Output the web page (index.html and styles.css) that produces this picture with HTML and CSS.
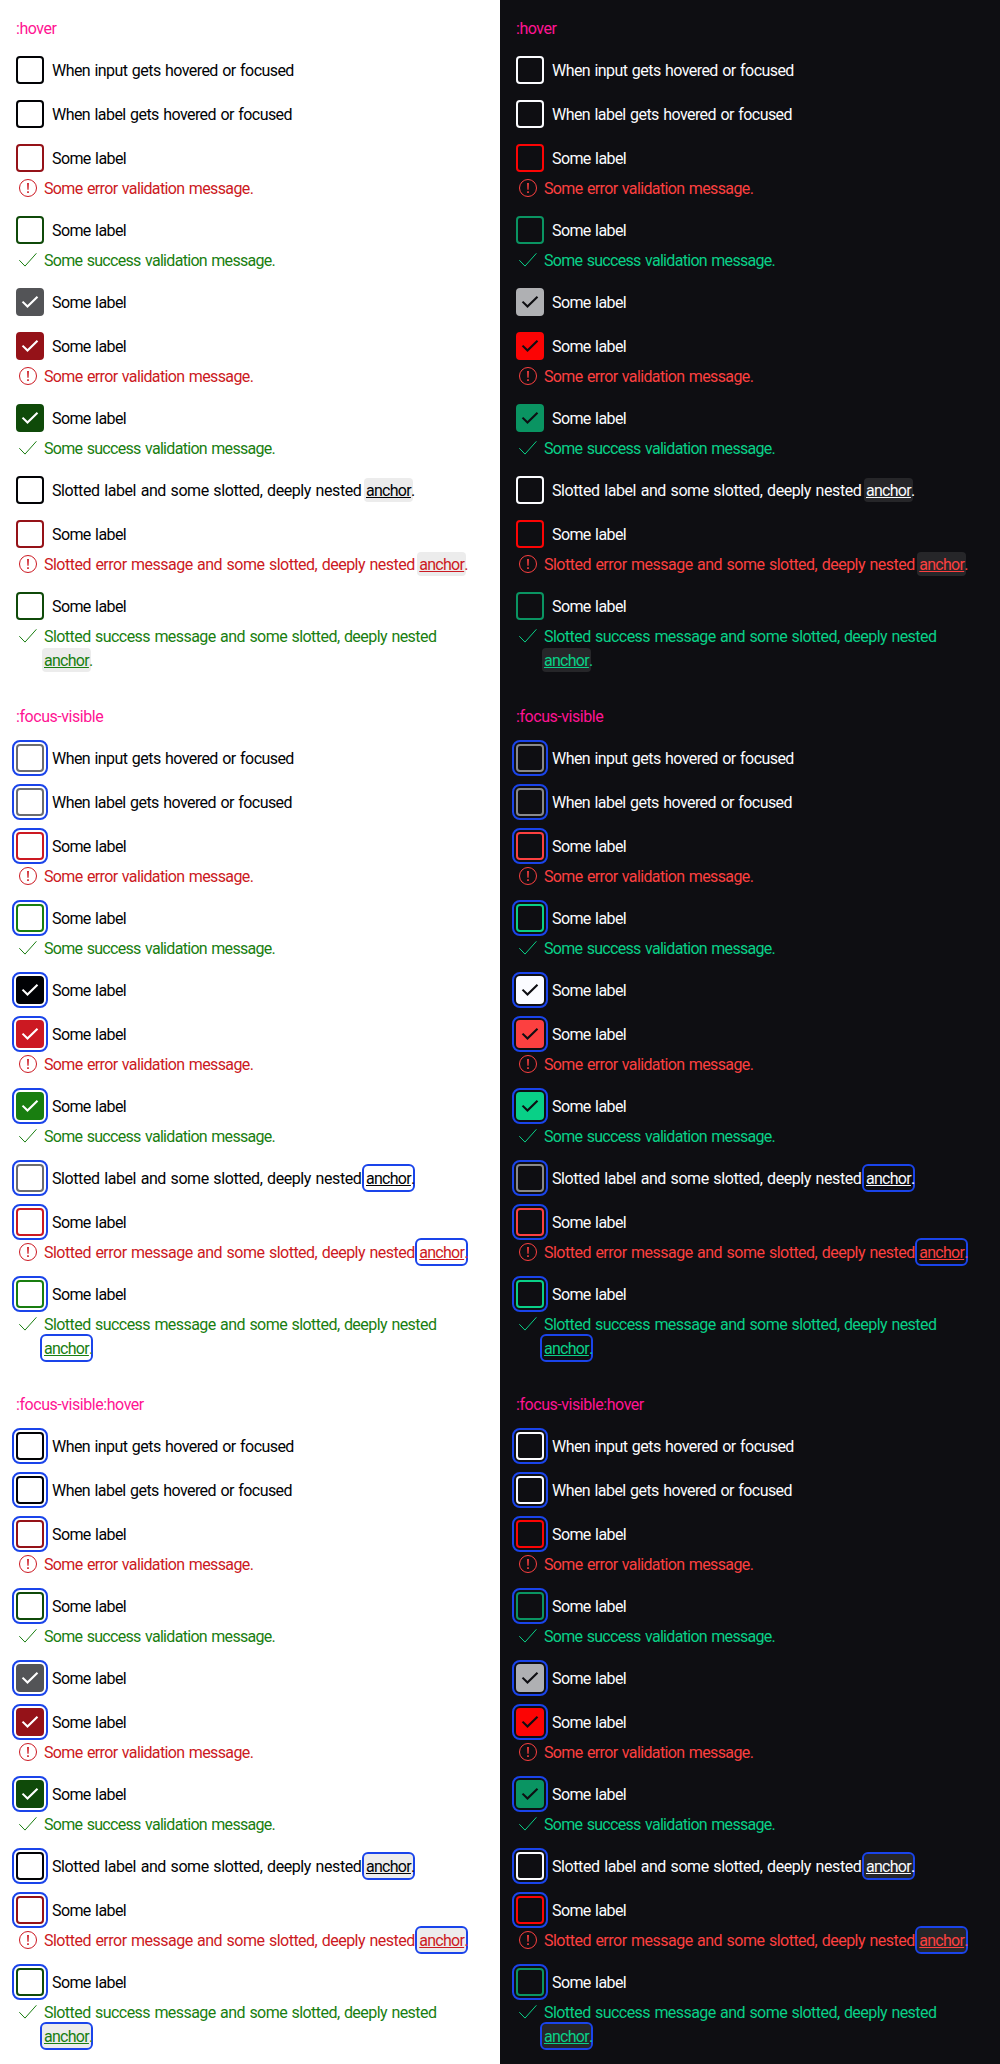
FILE: index.html
```html
<!DOCTYPE html>
<html lang="en">
<head>
<meta charset="utf-8">
<title>Checkbox states</title>
<link rel="stylesheet" href="styles.css">
</head>
<body>
<svg class="sprite" aria-hidden="true">
  <symbol id="tick" viewBox="0 0 24 24"><path d="m20.22 7.47-1.47-1.42-9.26 9.02-4.24-4.15-1.47 1.42 5.71 5.6z" fill="currentColor"/></symbol>
  <symbol id="success" viewBox="0 0 24 24"><path d="M3.3 12.2 9 18.1 20.4 5.3" fill="none" stroke="currentColor"/></symbol>
  <symbol id="error" viewBox="0 0 24 24"><circle cx="12" cy="12" r="8.5" fill="none" stroke="currentColor"/><path d="M11.1 7h1.8l-.3 6.8h-1.2zM11.2 15.2h1.6v1.7h-1.6z" fill="currentColor"/></symbol>
</svg>
<main class="themes">
  <div class="theme theme--light"></div>
  <div class="theme theme--dark"></div>
</main>
<script src="script.js"></script>
</body>
</html>
```
FILE: script.js
```js
const anchor = '<a class="anchor">anchor</a>.';
const messages = {
  error: '<span class="t-error">Some error validation message.</span>',
  success: '<span class="t-success">Some success validation message.</span>',
};
const label = '<span class="t-label">Some label</span>';
const fields = [
  { label: '<span class="t-input">When input gets hovered or focused</span>' },
  { label: '<span class="t-input">When label gets hovered or focused</span>' },
  { label, state: 'error', message: messages.error },
  { label, state: 'success', message: messages.success },
  { label, checked: true },
  { label, state: 'error', checked: true, message: messages.error },
  { label, state: 'success', checked: true, message: messages.success },
  { label: '<span class="t-slotted-label">Slotted label and some slotted, deeply nested </span>' + anchor },
  { label, state: 'error', message: '<span class="t-slotted-error">Slotted error message and some slotted, deeply nested </span>' + anchor },
  { label, state: 'success', message: '<span class="t-slotted-success">Slotted success message and some slotted, deeply nested </span>' + anchor },
];
const sections = [
  { title: ':hover', classes: 'is-hover' },
  { title: ':focus-visible', classes: 'is-focus' },
  { title: ':focus-visible:hover', classes: 'is-focus is-hover' },
];
const icon = (name) => `<svg class="icon"><use href="#${name}"/></svg>`;

const renderField = ({ label, state = 'none', checked, message }) => `
  <div class="field field--${state}">
    <label class="field__label">
      <span class="checkbox${checked ? ' checkbox--checked' : ''}">${checked ? icon('tick') : ''}</span>
      <span class="field__text">${label}</span>
    </label>
    ${message ? `<div class="message">${icon(state)}<p class="message__text">${message}</p></div>` : ''}
  </div>`;

const html = sections.map(({ title, classes }) => `
  <section class="section ${classes}">
    <h2 class="title">${title}</h2>
    ${fields.map(renderField).join('')}
  </section>`).join('');

document.querySelectorAll('.theme').forEach((el) => { el.innerHTML = html; });
```
FILE: styles.css
```css
* { box-sizing: border-box; }

body {
  margin: 0;
  font: 400 16px/24px Roboto, "Liberation Sans", sans-serif;
  word-spacing: 1px;
}

.sprite { display: none; }

.themes {
  display: grid;
  grid-template-columns: 1fr 1fr;
}

.theme {
  background: var(--background);
  color: var(--primary);
}

.theme--light {
  --background: #fff;
  --primary: #010205;
  --medium: #6b6d70;
  --high: #535457;
  --error: #cc1922;
  --error-hover: #951218;
  --success: #197e10;
  --success-hover: #0f4a09;
}

.theme--dark {
  --background: #0e0e12;
  --primary: #fbfcff;
  --medium: #88898c;
  --high: #afb0b3;
  --error: #fc4040;
  --error-hover: #fc0404;
  --success: #09d087;
  --success-hover: #0a9462;
}

.section {
  display: flex;
  flex-direction: column;
  gap: 16px;
  padding: 16px;
  height: 688px;
}

.title {
  margin: 0;
  padding-top: 1px;
  height: 24px;
  font: inherit;
  letter-spacing: -.45px;
  color: #ff1493;
}

.field {
  display: flex;
  flex-direction: column;
  gap: 4px;
}

.field__label {
  display: flex;
  gap: 8px;
  height: 28px;
}

.field__text { padding-top: 3px; }

/* Tracking per copy block */
.t-input { letter-spacing: -.56px; }
.t-label { letter-spacing: -.6px; }
.t-error { letter-spacing: -.63px; }
.t-success { letter-spacing: -.69px; }
.t-slotted-label { letter-spacing: -.41px; }
.t-slotted-error { letter-spacing: -.51px; }
.t-slotted-success { letter-spacing: -.555px; }

.checkbox {
  display: grid;
  place-items: center;
  flex: none;
  width: 28px;
  height: 28px;
  border: 2px solid var(--frame);
  border-radius: 4px;
}

.checkbox--checked {
  border-color: var(--fill);
  background: var(--fill);
  color: var(--background);
}

.field--none { --frame: var(--medium); --fill: var(--primary); }
.field--error { --frame: var(--error); --fill: var(--error); }
.field--success { --frame: var(--success); --fill: var(--success); }
.is-hover .field--none { --frame: var(--primary); --fill: var(--high); }
.is-hover .field--error { --frame: var(--error-hover); --fill: var(--error-hover); }
.is-hover .field--success { --frame: var(--success-hover); --fill: var(--success-hover); }

.is-focus .checkbox { outline: 2px solid #1a44ea; outline-offset: 2px; }

.icon {
  display: block;
  flex: none;
  width: 24px;
  height: 24px;
}

.message {
  display: flex;
  gap: 4px;
}

.message__text {
  margin: 0 0 -1px;
  padding-top: 1px;
}
.field--error .message { color: var(--error); }
.field--success .message { color: var(--success); }

.anchor {
  display: inline-block;
  height: 24px;
  margin: -1px -2px 0;
  padding: 1px 2px 0;
  border-radius: 4px;
  vertical-align: top;
  letter-spacing: -.73px;
  text-decoration: underline;
}

.is-hover .anchor { background: rgba(148, 149, 152, .18); }
.is-focus .anchor { outline: 2px solid #1a44ea; }
```
